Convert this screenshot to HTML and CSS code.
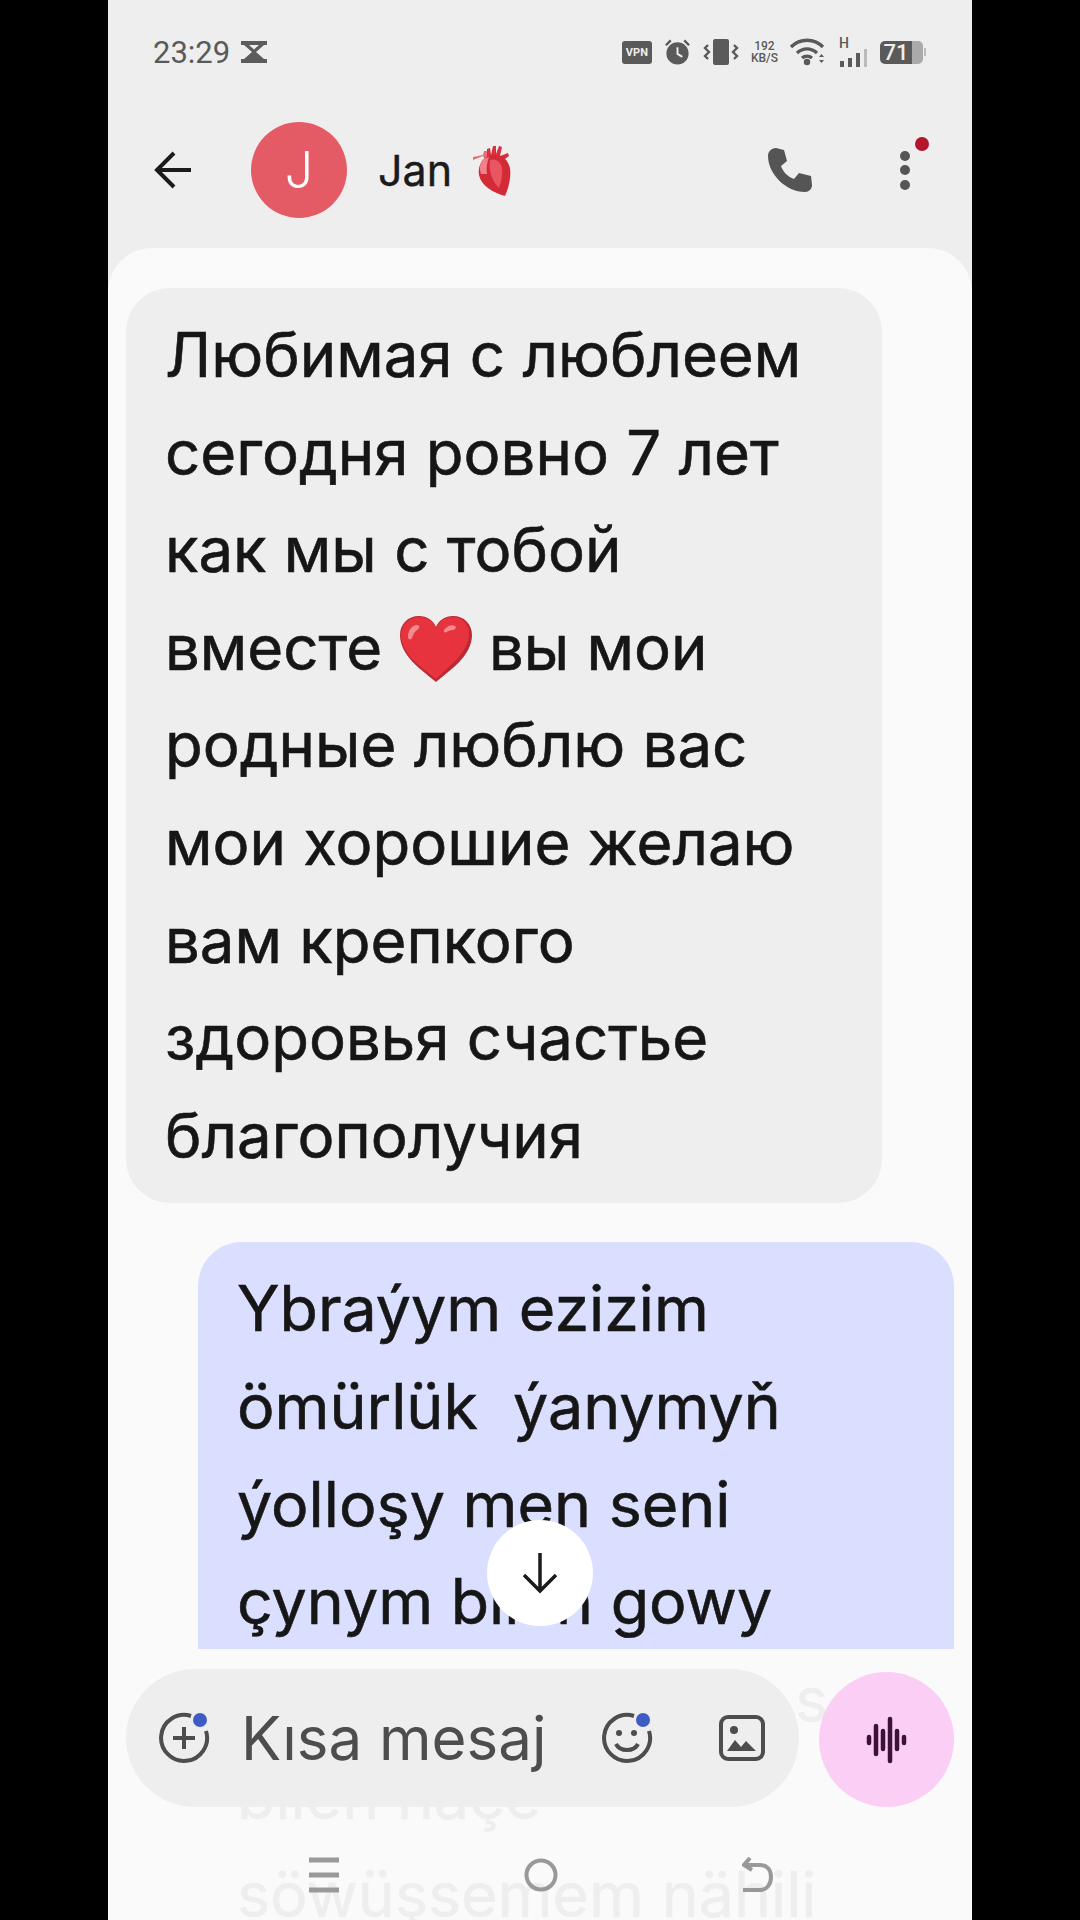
FILE: index.html
```html
<!DOCTYPE html>
<html lang="en">
<head>
    <meta charset="UTF-8">
    <meta name="viewport" content="width=device-width, initial-scale=1.0">
    <title>Jan - Messages</title>
    <link rel="stylesheet" href="styles.css">
</head>

<body>

<div class="phone">

    <div class="status-bar">
        <div class="status-left">
            <span class="clock">23:29</span>
            <svg class="hourglass" width="28" height="24" viewBox="0 0 28 24"><path d="M1 1h26v4h-3l-8 7 8 7h3v4H1v-4h3l8-7-8-7H1zM9 5l5 4.500L19 5z" fill="#5c5c5c" fill-rule="evenodd"/></svg>
        </div>
        <div class="status-right">
            <span class="vpn">VPN</span>
            <svg width="27" height="28" viewBox="0 0 28 28"><circle cx="14" cy="15.500" r="11.500" fill="#5a5a5a"/><path d="M14 9v7l5 3" stroke="#eee" stroke-width="2" fill="none"/><path d="M2 7l5-5M26 7l-5-5" stroke="#5a5a5a" stroke-width="2.500"/></svg>
            <svg width="36" height="28" viewBox="0 0 36 28"><rect x="10" y="1" width="16" height="26" rx="2" fill="#5a5a5a"/><path d="M5 7l-3 3 4 4-4 4 3 3M31 7l3 3-4 4 4 4-3 3" stroke="#5a5a5a" stroke-width="2.400" fill="none"/></svg>
            <div class="net-speed"><span>192</span><span>KB/S</span></div>
            <svg width="36" height="28" viewBox="0 0 36 28"><path d="M1 9c9-9 23-9 32 0M7 15c6-5.500 14-5.500 20 0M12 20c3-2.500 7-2.500 10 0" stroke="#5a5a5a" stroke-width="3.400" fill="none"/><circle cx="17" cy="24" r="3.200" fill="#5a5a5a"/><path d="M29 19l2.500-3 2.500 3zM29 22l2.500 3 2.500-3z" fill="#5a5a5a"/></svg>
            <div class="signal">
                <span class="signal-h">H</span>
                <svg width="30" height="18" viewBox="0 0 30 18"><rect x="2" y="12" width="4" height="6" fill="#5a5a5a"/><rect x="10" y="9" width="4" height="9" fill="#5a5a5a"/><rect x="18" y="4" width="4" height="14" fill="#5a5a5a"/><rect x="26" y="0" width="3" height="18" fill="#bbb"/></svg>
            </div>
            <div class="battery"><span class="battery-fill">71</span><span class="battery-rest"></span><span class="battery-tip"></span></div>
        </div>
    </div>

    <header class="top-bar">
        <svg class="back-icon" width="38" height="38" viewBox="0 0 38 38"><path d="M37 19H4M20 2L3 19l17 17" stroke="#1b1b1b" stroke-width="4" fill="none"/></svg>
        <div class="avatar">J</div>
        <h1 class="contact-name">Jan</h1>
        <svg class="organ-heart" width="40" height="52" viewBox="0 0 40 52">
            <path d="M12 7l3 0 2 9-3 3c-1-3-2-5-3-7L1 16v-3l10-2z" fill="#ef6a72"/>
            <path d="M15 5l3-1 1 7 2-9 3 0 0 8 3-8 3 1-2 9 8-3 1 3-8 6-14 2z" fill="#d8303c"/>
            <path d="M12 15c6-5 14-5 20-1 6 5 7 12 6 20-1 8-3 13-5 18C22 49 9 42 7 31 6 24 8 19 12 15z" fill="#d42a37"/>
            <path d="M11 15l6-2c-2 5-3 11-2 17l-6 0c-2-6-1-11 2-15z" fill="#f08089"/>
            <path d="M18 16c6-2 11 2 12 8 1 7-1 14-3 20-6-6-11-16-9-28z" fill="#e95560"/>
        </svg>
        <div class="top-actions">
            <svg width="46" height="46" viewBox="0 0 46 46"><path d="M9 1l8 2 3 11-6 5c2 6 7 11 13 13l5-6 12 3 1 9c0 4-3 7-7 7C19 45 1 27 1 9c0-4 3-8 8-8z" fill="#555"/></svg>
            <div class="more-menu">
                <span class="dot"></span><span class="dot"></span><span class="dot"></span>
                <span class="menu-badge"></span>
            </div>
        </div>
    </header>

    <main class="thread">
        <div class="bubble incoming">
            Любимая с люблеем<br>
            сегодня ровно 7 лет<br>
            как мы с тобой<br>
            вместе <svg class="heart-emoji" width="72" height="66" viewBox="0 0 72 66"><path d="M36 66C22 54 0 40 0 19 0 8 8 0 19 0c8 0 14 4 17 11 3-7 9-11 17-11 11 0 19 8 19 19 0 21-22 35-36 47z" fill="#b92a35"/><path d="M36 63C23 52 1 39 1 19 1 9 9 1 19 1c8 0 14 4 17 11 3-7 9-11 17-11 9 0 16 7 16 16 0 20-21 34-33 46z" fill="#e6333d"/><path d="M8 21c0-7 4-12 9-12 3 0 3 3 0 5-3 2-4 5-5 8-1 2-4 2-4-1z" fill="#f58a90"/><path d="M44 14c3-4 8-6 11-4 2 2 0 4-3 4-2 0-4 1-5 2-2 1-4 0-3-2z" fill="#f58a90"/></svg> вы мои<br>
            родные люблю вас<br>
            мои хорошие желаю<br>
            вам крепкого<br>
            здоровья счастье<br>
            благополучия
        </div>
        <div class="bubble outgoing">
            Ybraýym ezizim<br>
            ömürlük &nbsp;ýanymyň<br>
            ýolloşy men seni<br>
            çynym bilen gowy<br>
            <span class="line-tail">s</span><br>
            bilen naçe<br>
            söwüşsemem nähili
        </div>
    </main>

    <button class="scroll-down">
        <svg width="38" height="42" viewBox="0 0 38 42"><path d="M19 1v37M3 23l16 16 16-16" stroke="#1b1b1b" stroke-width="3.500" fill="none"/></svg>
    </button>

    <div class="bottom-area">
        <div class="composer">
            <div class="input-pill">
                <svg class="pill-icon" width="52" height="52" viewBox="0 0 52 52"><path d="M33 4a23 23 0 1 0 15 15" stroke="#4d4d4d" stroke-width="4" fill="none"/><path d="M26 15v22M15 26h22" stroke="#4d4d4d" stroke-width="4"/><circle cx="42" cy="8" r="7" fill="#3f5cc4"/></svg>
                <span class="placeholder">Kısa mesaj</span>
                <svg class="pill-icon smile" width="52" height="52" viewBox="0 0 52 52"><path d="M33 4a23 23 0 1 0 15 15" stroke="#4d4d4d" stroke-width="4" fill="none"/><circle cx="18" cy="21" r="3" fill="#4d4d4d"/><circle cx="33" cy="21" r="3" fill="#4d4d4d"/><path d="M15 32c4 8 18 8 22 0" stroke="#4d4d4d" stroke-width="4" fill="none"/><circle cx="42" cy="8" r="7" fill="#3f5cc4"/></svg>
                <svg class="pill-icon" width="46" height="46" viewBox="0 0 46 46"><rect x="2" y="2" width="42" height="42" rx="7" stroke="#4d4d4d" stroke-width="4" fill="none"/><circle cx="15" cy="15" r="4" fill="#4d4d4d"/><path d="M8 36l8-11 6 7 5-6 10 10z" fill="#4d4d4d"/></svg>
            </div>
            <button class="voice-button">
                <svg width="42" height="48" viewBox="0 0 42 48"><path d="M3 21v6M10 10v28M17 15v18M24 3v42M31 15v18M38 21v6" stroke="#3c1238" stroke-width="4.500" stroke-linecap="round"/></svg>
            </button>
        </div>
        <nav class="nav-bar">
            <svg width="32" height="36" viewBox="0 0 32 36"><path d="M1 3h30M1 18h30M1 33h30" stroke="#999" stroke-width="5"/></svg>
            <svg width="34" height="34" viewBox="0 0 34 34"><circle cx="17" cy="17" r="14.500" stroke="#999" stroke-width="4" fill="none"/></svg>
            <svg width="32" height="36" viewBox="0 0 32 36"><path d="M8 1L2 8l8 5M2 8h16c7 0 11 5 11 12s-4 13-11 13H1" stroke="#999" stroke-width="4" fill="none"/></svg>
        </nav>
    </div>

</div>

</body>
</html>
```

FILE: styles.css
```css
/* General Styles */
body {
    margin: 0;
    padding: 0;
    background-color: #000;
    font-family: Inter, Roboto, sans-serif;
}

.phone {
    position: relative;
    width: 864px;
    height: 1920px;
    margin: 0 auto;
    background-color: #eeeeef;
    overflow: hidden;
}

/* Status bar */
.status-bar {
    height: 104px;
    padding: 0 46px 0 45px;
    display: flex;
    justify-content: space-between;
    align-items: center;
    color: #5a5a5a;
}

.status-left {
    display: flex;
    align-items: center;
    gap: 10px;
}

.clock {
    font-family: Roboto, sans-serif;
    font-size: 31px;
}

.status-right {
    display: flex;
    align-items: center;
    gap: 12px;
    font-family: Roboto, sans-serif;
}

.vpn {
    background-color: #5a5a5a;
    color: #eee;
    width: 30px;
    height: 23px;
    border-radius: 3px;
    font-size: 11px;
    font-weight: bold;
    line-height: 23px;
    text-align: center;
}

.net-speed {
    display: flex;
    flex-direction: column;
    align-items: center;
    font-size: 12px;
    line-height: 12px;
    font-weight: 500;
}

.signal {
    position: relative;
    width: 30px;
    height: 30px;
    display: flex;
    align-items: flex-end;
}

.signal-h {
    position: absolute;
    top: -2px;
    left: 1px;
    font-size: 14px;
    font-weight: 500;
}

.battery {
    display: flex;
    align-items: center;
    height: 23px;
}

.battery-fill {
    width: 32px;
    height: 23px;
    background-color: #5a5a5a;
    color: #eee;
    border-radius: 5px 0 0 5px;
    font-size: 22px;
    font-weight: 500;
    line-height: 23px;
    text-align: center;
}

.battery-rest {
    width: 11px;
    height: 23px;
    background-color: #aaa;
    border-radius: 0 5px 5px 0;
}

.battery-tip {
    width: 2px;
    height: 8px;
    margin-left: 1px;
    background-color: #bbb;
}

/* Top bar */
.top-bar {
    height: 144px;
    box-sizing: border-box;
    padding: 0 62px 12px 46px;
    display: flex;
    align-items: center;
}

.avatar {
    width: 96px;
    height: 96px;
    margin-left: 59px;
    border-radius: 50%;
    background-color: #e55b65;
    color: #fff;
    font-size: 50px;
    font-weight: 300;
    line-height: 96px;
    text-align: center;
}

.contact-name {
    margin: 0 0 0 31px;
    font-size: 43px;
    font-weight: 400;
    color: #1b1b1b;
    -webkit-text-stroke: 0.4px #1b1b1b;
}

.organ-heart {
    margin-left: 20px;
}

.top-actions {
    margin-left: auto;
    display: flex;
    align-items: center;
    gap: 87px;
}

.more-menu {
    position: relative;
    display: flex;
    flex-direction: column;
    gap: 4.500px;
    width: 10px;
}

.dot {
    width: 10px;
    height: 10px;
    border-radius: 50%;
    background-color: #555;
}

.menu-badge {
    position: absolute;
    top: -14px;
    left: 15px;
    width: 14px;
    height: 14px;
    border-radius: 50%;
    background-color: #b3152a;
}

/* Messages */
.thread {
    height: 1672px;
    padding: 40px 18px 0;
    box-sizing: border-box;
    background-color: #fafafa;
    border-radius: 44px 44px 0 0;
}

.bubble {
    width: 756px;
    box-sizing: border-box;
    padding: 18px 10px 19px 39px;
    border-radius: 44px;
    font-size: 61.700px;
    line-height: 97.6px;
    color: #161616;
    -webkit-text-stroke: 0.6px #161616;
}

.incoming {
    background-color: #eeeeef;
}

/* the bubble colour stops where the composer area starts, only the words run on under it */
.outgoing {
    margin: 39px 0 0 72px;
    font-size: 62.700px;
    background: linear-gradient(#dadeff 407px, transparent 407px);
    white-space: nowrap;
}

.heart-emoji {
    vertical-align: -12px;
}

.line-tail {
    margin-left: 558px;
}

.scroll-down {
    position: absolute;
    top: 1520px;
    left: 379px;
    width: 106px;
    height: 106px;
    padding: 0;
    border: none;
    border-radius: 50%;
    background-color: #fff;
    display: flex;
    justify-content: center;
    align-items: center;
}

/* Composer sits over the end of the thread and fades it out */
.bottom-area {
    position: absolute;
    top: 1649px;
    left: 0;
    right: 0;
    bottom: 0;
    background-color: rgba(250, 250, 250, 0.95);
}

.composer {
    margin-top: 19px;
    padding: 0 18px;
    display: flex;
    justify-content: space-between;
    align-items: center;
}

.input-pill {
    width: 673px;
    height: 138px;
    box-sizing: border-box;
    padding: 0 34px 0 32px;
    border-radius: 69px;
    background-color: #eeeeef;
    display: flex;
    align-items: center;
}

.placeholder {
    margin-left: 31px;
    font-size: 60px;
    color: #4d4d4d;
}

.smile {
    margin-left: auto;
    margin-right: 66px;
}

.voice-button {
    width: 135px;
    height: 135px;
    margin-top: 4px;
    padding: 0;
    border: none;
    border-radius: 50%;
    background-color: #fbcff5;
    display: flex;
    justify-content: center;
    align-items: center;
}

.nav-bar {
    margin-top: 50px;
    padding: 0 198px 0 200px;
    display: flex;
    justify-content: space-between;
    align-items: center;
}
```
